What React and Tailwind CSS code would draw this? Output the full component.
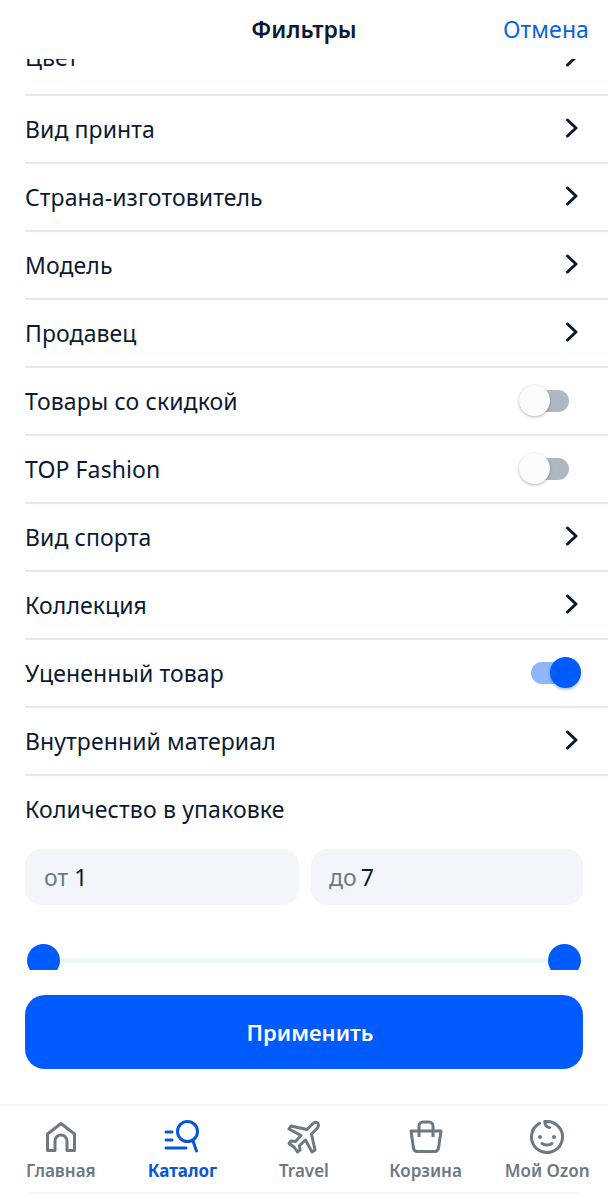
const font = { fontFamily: '"Noto Sans", sans-serif' };

function Chevron() {
  return (
    <svg width="16" height="20" viewBox="0 0 16 20" fill="none" className="text-[#0b1a33]">
      <path d="M3.5 2 L12 10 L3.5 18" stroke="currentColor" strokeWidth="3" strokeLinecap="round" strokeLinejoin="round" />
    </svg>
  );
}

function Toggle({ on }) {
  if (on) {
    return (
      <div className="relative w-[50px] h-[32px] flex items-center">
        <div className="w-[40px] h-[22px] rounded-full bg-[#8fb6fb]" />
        <div className="absolute right-0 top-0 w-[31px] h-[31px] rounded-full bg-[#005bff] shadow-[0_2px_3px_rgba(0,60,160,0.3)]" />
      </div>
    );
  }
  return (
    <div className="relative w-[50px] h-[32px] flex items-center justify-end">
      <div className="w-[40px] h-[22px] rounded-full bg-[#adb8c4]" />
      <div className="absolute left-0 top-0 w-[31px] h-[31px] rounded-full bg-[#fbfbfb] shadow-[0_1px_3px_rgba(0,0,0,0.3)]" />
    </div>
  );
}

function Row({ label, toggle }) {
  return (
    <div className="h-[68px] ml-[25px] border-b-2 border-[#e3e8ef] flex items-center justify-between">
      <span className="text-[23px] tracking-[0.1px] text-[#0b1a33]">{label}</span>
      {toggle === undefined ? (
        <div className="mr-[28px] -mt-[2px]"><Chevron /></div>
      ) : (
        <div className={toggle ? 'mr-[27px]' : 'mr-[39px]'}><Toggle on={toggle} /></div>
      )}
    </div>
  );
}

const rows = [
  ['Вид принта'],
  ['Страна-изготовитель'],
  ['Модель'],
  ['Продавец'],
  ['Товары со скидкой', false],
  ['TOP Fashion', false],
  ['Вид спорта'],
  ['Коллекция'],
  ['Уцененный товар', true],
  ['Внутренний материал'],
];

function HomeIcon() {
  return (
    <svg width="32" height="32" viewBox="0 0 32 32" fill="none" stroke="#6d7885" strokeWidth="3" strokeLinejoin="round">
      <path d="M2.500 13 L16 2.500 L29.500 13 V29.500 H22 V20 a6 6 0 0 0 -12 0 V29.500 H2.500 Z" />
    </svg>
  );
}

function CatalogIcon() {
  return (
    <svg width="38" height="36" viewBox="0 0 38 36" fill="none" stroke="#0a56d8" strokeWidth="3" strokeLinecap="round">
      <circle cx="24.500" cy="12.500" r="10" />
      <path d="M30 22 L33.500 32" />
      <path d="M3 13 H9 M3 21 H9 M3 29 H23" />
    </svg>
  );
}

function PlaneIcon() {
  return (
    <svg width="34" height="34" viewBox="0 0 34 34" fill="none" stroke="#6d7885" strokeWidth="3" strokeLinejoin="round">
      <path d="M30 2.500 C32 3.500 32 6 30 8.500 L24.500 14 L28 30 L25 32 L18.500 20 L12.500 25.500 L13 30 L10.500 32 L7 27 L2 23.500 L4 21 L8.500 21.500 L14 15.500 L2 9 L4 6 L20 9.500 L25.500 4 C27 2.500 29 2 30 2.500 Z" />
    </svg>
  );
}

function BasketIcon() {
  return (
    <svg width="34" height="34" viewBox="0 0 34 34" fill="none" stroke="#6d7885" strokeWidth="3" strokeLinejoin="round">
      <path d="M2 11 H32 L29.500 28 a4 4 0 0 1 -4 3.500 H8.500 a4 4 0 0 1 -4 -3.500 Z" />
      <path d="M10 17 V6 a4 4 0 0 1 4 -4 H20 a4 4 0 0 1 4 4 V17" />
    </svg>
  );
}

function FaceIcon() {
  return (
    <svg width="36" height="36" viewBox="0 0 36 36" fill="none" stroke="#6d7885" strokeWidth="3" strokeLinecap="round">
      <path d="M16 2.600 A15.500 15.500 0 1 1 10.500 4.400" />
      <path d="M16 2.600 C15.500 5.500 17.500 8.500 20.500 8.500" />
      <circle cx="11" cy="18" r="2" fill="#6d7885" stroke="none" />
      <circle cx="25" cy="18" r="2" fill="#6d7885" stroke="none" />
      <path d="M13 24.500 c2.500 2 7.500 2 10 0" />
    </svg>
  );
}

function Tab({ icon, label, active }) {
  return (
    <div className="flex flex-col items-center w-[122px]">
      <div className="h-[36px] flex items-center justify-center">{icon}</div>
      <span className={active ? 'mt-[5px] text-[17px] font-bold text-[#0a56d8] leading-[22px]' : 'mt-[5px] text-[17px] font-semibold text-[#6d7885] leading-[22px] whitespace-nowrap'}>{label}</span>
    </div>
  );
}

export default function App() {
  return (
    <div className="w-[608px] h-[1200px] bg-white flex flex-col overflow-hidden" style={font}>
      {/* Header */}
      <div className="h-[59px] flex items-center justify-center relative bg-white z-10">
        <span className="text-[23px] font-semibold text-[#0b1a33]">Фильтры</span>
        <span className="absolute right-[19px] text-[23px] tracking-[0.1px] text-[#0a62dc]">Отмена</span>
      </div>

      {/* Filters, the first row is scrolled under the header */}
      <div className="h-[37px] ml-[25px] border-b-2 border-[#e3e8ef] overflow-hidden relative flex justify-between">
        <span className="text-[23px] text-[#0b1a33] leading-[23px] -mt-[13px]">Цвет</span>
        <div className="mr-[28px] -mt-[12px]"><Chevron /></div>
      </div>
      {rows.map(([label, toggle]) => <Row key={label} label={label} toggle={toggle} />)}

      <div className="px-[25px]">
        <div className="mt-[19px] text-[23px] tracking-[0.15px] text-[#0b1a33] leading-[28px]">Количество в упаковке</div>
        <div className="mt-[26px] flex gap-[12px]">
          <div className="flex-1 h-[56px] rounded-[16px] bg-[#f2f5f9] flex items-center px-[19px] text-[23px]">
            <span className="text-[#6d7885]">от</span><span className="ml-[6px] text-[#0b1a33]">1</span>
          </div>
          <div className="flex-1 h-[56px] rounded-[16px] bg-[#f2f5f9] flex items-center px-[18px] text-[23px]">
            <span className="text-[#6d7885]">до</span><span className="ml-[4px] text-[#0b1a33]">7</span>
          </div>
        </div>

        {/* Range slider, thumbs clipped at the bottom */}
        <div className="relative mt-[39px] h-[26px] mx-[2px] overflow-hidden">
          <div className="absolute left-0 right-0 top-[14px] h-[5px] bg-[#ecf5fa]" />
          <div className="absolute left-0 top-0 w-[33px] h-[33px] rounded-full bg-[#005bff]" />
          <div className="absolute right-0 top-0 w-[33px] h-[33px] rounded-full bg-[#005bff]" />
        </div>

        <div className="mt-[25px] h-[74px] rounded-[20px] bg-[#005bff] flex items-center justify-center pl-[12px] text-[22px] font-semibold text-white">
          Применить
        </div>
      </div>

      {/* Bottom tabs */}
      <div className="mt-[35px] border-t-2 border-[#f4f5f7] h-[88px] flex justify-between pt-[13px]">
        <Tab icon={<HomeIcon />} label="Главная" />
        <Tab icon={<CatalogIcon />} label="Каталог" active />
        <Tab icon={<PlaneIcon />} label="Travel" />
        <Tab icon={<BasketIcon />} label="Корзина" />
        <Tab icon={<FaceIcon />} label="Мой Ozon" />
      </div>
      <div className="mx-[29px] border-t-2 border-[#f4f5f7]" />
    </div>
  );
}
